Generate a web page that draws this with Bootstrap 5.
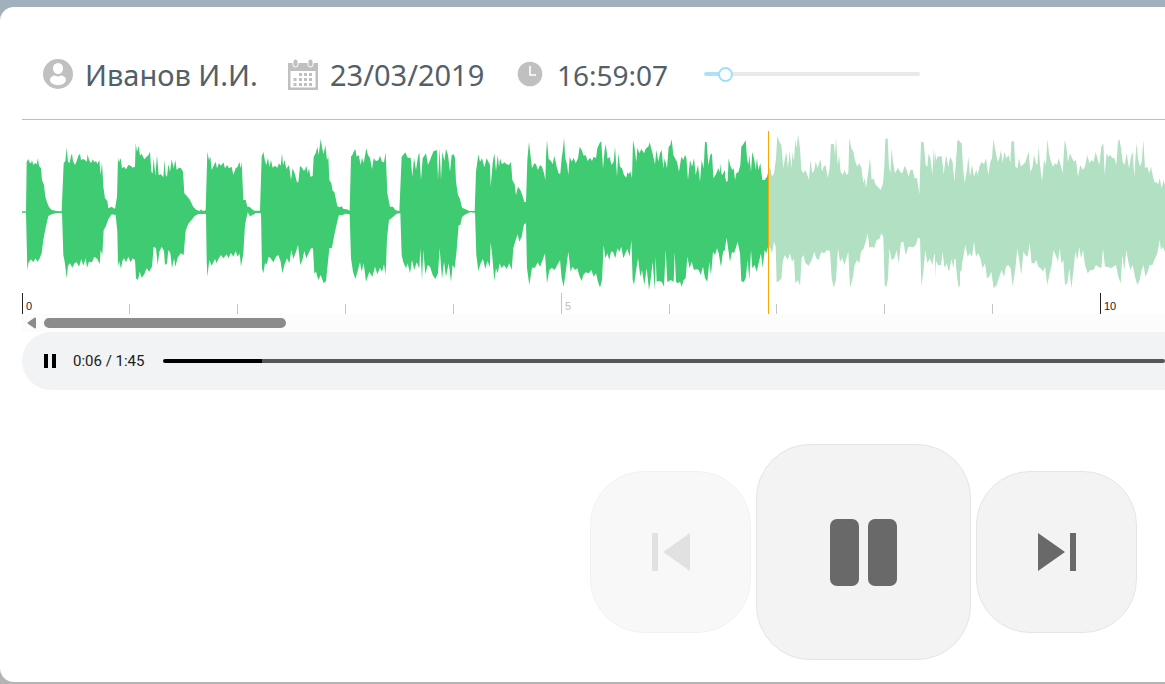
<!DOCTYPE html>
<html lang="ru">
<head>
<meta charset="utf-8">
<meta name="viewport" content="width=device-width, initial-scale=1">
<title>Запись разговора</title>
<link href="https://cdn.jsdelivr.net/npm/bootstrap@5.3.0/dist/css/bootstrap.min.css" rel="stylesheet">
<style>
  body { background: linear-gradient(#a0b1bd, #b4b4b6); font-family: "Noto Sans", "Open Sans", sans-serif; }
  .sheet { margin: 7px 0 2px; min-height: calc(100vh - 9px); border-radius: 14px 0 0 14px; padding-left: 22px; }
  .call-info { height: 113px; padding: 22px 0 0 21px; border-bottom: 1px solid #bdbdbd; color: #535f69; font-size: 29px; line-height: 40px; }
  .call-info svg { flex: none; fill: #c0c0c0; }
  .call-info span { padding-top: 2px; }
  .info-name { width: 245px; }
  .info-date { width: 227px; }
  .info-time { width: 189px; font-size: 28px; }
  input.slim { appearance: none; -webkit-appearance: none; display: block; margin: 0; height: 16px; background: transparent; }
  input.slim::-webkit-slider-runnable-track { height: 4px; border-radius: 2px; background: linear-gradient(to right, var(--on) var(--done), var(--off) var(--done)); }
  input.slim::-webkit-slider-thumb { -webkit-appearance: none; }
  .volume { --on: #abe2fb; --off: #e9e9e9; width: 216px; }
  .volume::-webkit-slider-thumb { width: 15px; height: 15px; margin-top: -5px; border: 2px solid #9fdefa; border-radius: 50%; background: #fafdff; }
  .seek { --on: #000; --off: #565656; min-width: 0; }
  .seek::-webkit-slider-thumb { width: 4px; height: 4px; background: transparent; }
  .wave { margin-top: 11px; overflow: hidden; }
  .wave svg { flex: none; }
  .hscroll { height: 18px; background: #fcfcfc; padding-left: 5px; gap: 7px; }
  .hscroll-thumb { width: 242px; height: 10px; border-radius: 5px; background: #8b8b8b; }
  .player { height: 58px; border-radius: 29px 0 0 29px; background: #f1f3f4; padding-left: 22px; font-family: Roboto, sans-serif; font-size: 15px; color: #202020; }
  .player time { width: 74px; margin: 0 16px 0 17px; white-space: nowrap; }
  .controls { padding: 54px 28px 22px 0; gap: 5px; }
  .ctl { width: 161px; height: 162px; padding: 0; border: 1px solid #e5e5e5; border-radius: 54px; background: #f3f3f3; color: #696969; }
  .ctl-main { width: 215px; height: 216px; }
  .ctl:disabled { opacity: .5; background: #f3f3f3; border-color: #e5e5e5; color: #c4c4c4; }
</style>
</head>
<body>
<main class="sheet bg-white overflow-hidden">
  <header class="call-info d-flex align-items-center">
    <div class="info-name d-flex align-items-center gap-2">
      <svg width="30" height="30" viewBox="0 0 30 30"><circle cx="15" cy="15" r="15"/><ellipse cx="15" cy="9.500" rx="5" ry="5.500" fill="#fff"/><path fill="#fff" d="M7 21c0-3 3-4.500 5-4.500 2 1.200 4 1.200 6 0 2 0 5 1.500 5 4.500 0 3-4 5.200-8 5.200S7 24 7 21z"/></svg>
      <span class="ps-1">Иванов И.И.</span>
    </div>
    <div class="info-date d-flex align-items-center gap-2">
      <svg width="30" height="31" viewBox="0 0 30 31"><path fill-rule="evenodd" d="M0 4h30v27H0zM2.500 12v16.500h25V12z"/><g stroke="#fff" stroke-width="1"><rect x="5" y="0" width="5" height="8" rx="2.500"/><rect x="20" y="0" width="5" height="8" rx="2.500"/></g><path d="M11 14h3v3h-3zM16 14h3v3h-3zM21 14h3v3h-3zM5.500 19h3v3h-3zM11 19h3v3h-3zM16 19h3v3h-3zM21 19h3v3h-3zM5.500 24h3v3h-3zM11 24h3v3h-3zM16 24h3v3h-3zM21 24h3v3h-3z"/></svg>
      <span class="ps-1">23/03/2019</span>
    </div>
    <div class="info-time d-flex align-items-center gap-2">
      <svg width="30" height="30" viewBox="0 0 30 30"><circle cx="15" cy="15" r="12.300"/><path d="M15 7v9h6" fill="none" stroke="#fff" stroke-width="1.600"/></svg>
      <span class="ps-1">16:59:07</span>
    </div>
    <input class="slim volume" type="range" min="0" max="100" value="7" aria-label="Громкость" style="--done: 10%">
  </header>

  <section class="wave d-flex" aria-label="Форма сигнала">
    <svg width="1143" height="183" viewBox="0 0 1143 183">
      <svg width="1143" height="183" viewBox="0 18 3429 549">
        <g fill="#3fcb72">
          <path transform="translate(-21 0)" d="M21 259L33 259 35 110 40 102 43 112 48 115 51 106 55 120 60 114 65 118 69 100 72 122 78 130 81 165 87 180 91 215 97 235 102 246 110 255 125 258 140 259 146 115 151 108 155 68 159 110 164 114 168 92 171 86 174 108 180 120 185 108 190 92 195 86 198 105 205 102 210 105 215 110 218 88 222 105 228 114 234 103 238 112 243 108 247 117 253 106 257 150 261 112 265 185 270 220 277 228 280 250 290 245 295 249 300 251 306 215 309 98 312 112 317 100 321 130 327 125 333 133 340 120 347 122 353 128 360 125 362 55 366 80 371 62 375 92 380 86 388 103 395 95 400 91 405 80 409 140 413 145 416 98 421 152 426 90 431 150 438 148 445 157 449 105 452 150 456 155 460 118 465 140 470 103 476 130 481 105 485 135 492 128 498 130 504 140 508 205 515 212 525 225 535 246 545 255 555 258 558 252 563 258 572 256 575 150 577 80 582 105 586 95 590 135 597 120 602 110 606 130 612 115 618 122 625 112 630 130 636 120 642 130 650 125 655 150 662 130 668 125 673 110 677 130 680 110 685 225 692 225 697 245 703 245 715 256 720 257V266L705 274 698 262 690 300 685 385 678 425 674 385 668 395 662 378 655 395 648 383 640 400 635 388 625 400 618 390 610 402 605 415 600 402 590 422 583 405 577 455 575 405 573 267 550 267 540 272 530 284 520 296 512 317 506 390 497 385 488 398 481 425 477 400 471 430 466 385 460 375 456 415 450 420 447 378 440 365 433 380 428 420 423 370 416 365 411 425 407 432 403 440 395 430 388 448 380 458 374 440 369 465 363 460 360 405 353 400 347 412 340 395 333 412 327 400 322 408 318 432 313 408 309 425 307 320 302 270 290 268 280 283 272 305 266 315 262 390 257 375 254 418 247 402 238 395 231 412 222 410 216 428 212 400 205 422 199 402 192 425 185 412 178 415 172 428 165 415 159 422 155 460 149 410 145 390 141 264 125 264 110 268 100 273 92 308 85 345 80 385 74 400 68 410 61 400 55 412 48 403 41 412 37 435 35 350 33 263 21 263z"/>
          <path transform="translate(684 0)" d="M15 257L30 257 35 95 40 80 45 108 49 120 54 98 58 125 63 105 68 128 75 122 82 128 87 115 92 122 96 85 99 120 104 105 109 132 117 120 123 165 128 130 134 145 141 172 145 172 150 123 156 128 161 137 165 135 169 122 173 145 177 130 181 155 188 153 191 95 197 85 202 65 206 90 212 42 217 72 221 88 226 60 231 105 235 95 238 165 244 175 248 198 253 200 262 244 270 247 275 243 280 252 290 253 299 257 303 95 307 90 312 78 316 72 320 95 326 90 332 120 336 98 341 115 349 70 354 90 360 100 366 132 371 100 378 108 385 106 390 92 396 110 402 112 407 82 412 205 420 245 429 245 436 255 448 259 455 95 461 88 466 82 473 98 482 98 487 155 492 98 498 135 504 95 508 82 513 165 518 100 528 85 534 120 541 103 548 85 551 78 561 76 564 165 569 70 573 165 577 80 583 108 588 72 594 90 600 140 605 90 611 88 615 98 618 170 624 210 630 222 636 248 647 253 657 258 674 258 678 140 685 88 690 110 696 100 703 127 710 100 720 120V425L712 408 706 432 699 402 692 415 685 438 679 390 675 263 660 262 643 270 636 277 631 300 626 300 620 375 614 430 608 420 603 470 596 415 588 455 582 410 576 462 569 370 564 445 556 462 548 450 540 425 533 420 526 448 520 375 516 465 511 370 508 430 500 412 493 435 486 405 480 445 473 415 468 430 460 412 455 390 451 265 440 266 428 277 417 285 411 340 407 450 402 418 396 440 390 428 382 448 375 425 367 455 358 440 348 470 341 415 335 440 330 412 324 435 316 462 309 440 303 400 299 268 286 266 276 271 267 270 260 298 253 330 246 368 238 370 232 430 228 468 221 475 212 450 205 465 198 440 193 445 189 370 183 370 176 385 169 400 163 378 157 405 151 420 144 360 138 380 130 402 124 375 118 415 111 400 104 418 97 445 92 410 85 390 78 395 70 412 62 400 56 395 50 418 45 415 40 445 36 430 33 264 15 264z"/>
          <path transform="translate(1389 0)" d="M15 120L17 185 23 115 28 85 33 138 38 90 42 125 45 100 51 118 58 112 65 118 72 120 78 110 82 165 89 178 93 210 99 185 106 195 112 210 118 231 123 231 127 105 132 50 138 105 141 130 148 115 153 118 159 135 165 120 171 125 177 145 181 165 183 95 186 45 191 102 198 108 203 118 208 92 215 125 222 148 226 145 230 100 233 80 237 38 241 100 246 118 250 150 254 95 260 110 266 98 272 115 279 100 284 65 290 75 296 92 302 90 308 108 315 98 321 108 326 95 333 100 337 70 345 52 349 50 354 130 359 75 362 57 368 102 374 95 379 120 386 110 390 65 396 155 400 85 405 125 411 130 417 150 424 158 427 142 432 148 436 138 441 160 444 45 449 70 454 112 457 68 463 85 469 72 477 85 483 70 490 65 494 52 499 72 504 90 510 118 514 75 520 110 525 85 530 75 535 130 539 100 546 130 551 65 556 60 560 42 565 90 570 100 576 110 582 140 589 95 595 105 600 90 604 98 609 165 615 105 621 125 627 100 632 150 639 120 645 170 650 105 656 130 660 50 665 52 670 120 676 90 681 85 685 160 693 148 700 130 706 145 712 150 720 135V375L714 380 708 425 701 385 696 370 690 390 684 380 678 450 673 410 667 470 660 460 654 425 647 450 641 435 634 432 627 435 620 410 614 430 607 395 602 460 596 465 590 485 585 470 578 475 573 470 569 380 566 470 557 465 547 472 542 375 537 485 530 470 521 468 515 470 512 395 509 495 503 410 498 455 492 495 485 430 478 480 471 435 466 455 459 400 452 445 447 480 443 465 439 345 434 395 427 372 421 385 415 400 409 365 403 380 397 370 391 400 384 380 378 380 373 405 367 385 361 400 356 360 351 465 345 488 339 470 333 445 326 455 319 435 311 445 302 442 295 450 290 468 283 452 277 430 270 435 263 425 257 440 250 380 243 435 236 485 230 460 225 405 217 420 209 435 200 428 193 435 186 475 180 385 173 405 165 425 158 412 150 428 141 428 133 480 126 430 123 295 117 298 110 335 103 350 98 328 92 345 85 370 80 435 73 415 65 432 57 420 50 430 44 415 38 445 33 430 28 468 22 395 17 352 15 410z"/>
          <path transform="translate(2094 0)" d="M0 115L6 155 12 145 19 170 23 168 26 100 32 125 37 135 41 130 45 165 49 145 55 142 61 120 64 65 70 58 77 45 81 100 85 120 88 90 93 140 97 80 103 105 107 135 111 100 115 135 121 115 127 165 134 165 141 155 145 140V362L139 385 134 375 128 428 123 385 117 410 110 440 104 420 97 430 93 375 88 465 83 405 77 460 71 472 64 468 60 385 53 350 47 370 42 385 36 380 30 410 25 375 20 338 15 370 9 375 0 420z"/>
        </g>
        <g fill="#b1e0c3">
          <path transform="translate(2094 0)" d="M145 140L150 125 156 155 162 145 168 100 172 32 178 50 184 60 190 130 195 100 199 82 204 130 209 75 214 130 218 82 222 110 226 45 230 70 234 28 240 70 244 135 250 145 256 135 261 148 267 165 271 105 277 145 283 135 287 110 293 130 301 102 306 140 311 125 317 120 323 160 329 130 333 57 342 58 345 95 348 35 353 120 357 90 362 140 368 150 374 135 379 150 385 145 388 38 394 70 400 80 406 110 412 125 418 115 424 128 430 175 434 160 438 190 445 140 450 98 455 165 461 160 466 178 473 185 482 195 489 175 493 125 496 42 503 40 507 125 511 145 515 70 519 110 525 145 534 128 540 140 547 145 554 122 560 135 566 155 571 135 578 135 584 160 591 160 598 208 603 50 611 52 617 120 622 125 626 85 631 100 637 150 641 70 647 150 652 95 660 95 665 92 671 150 678 90 685 130 691 95 697 110 703 185 708 110 714 45 720 50V490L713 460 708 400 701 405 694 405 687 435 681 405 675 430 668 375 662 415 656 422 649 410 643 385 637 420 630 400 622 415 616 375 610 440 604 485 600 340 593 340 587 360 580 367 572 365 565 365 557 390 550 350 543 352 536 415 530 375 523 400 515 405 508 370 504 460 499 487 494 480 490 335 484 325 478 342 470 345 463 368 455 365 448 368 443 325 437 350 430 372 423 380 418 415 411 405 404 420 398 460 390 490 385 380 379 400 373 420 367 400 360 410 354 370 348 465 341 488 335 460 330 378 321 375 312 385 304 380 296 405 289 400 283 380 275 405 266 422 256 413 250 390 245 400 240 482 234 465 226 475 222 400 216 410 210 385 203 405 195 390 189 405 184 460 177 468 170 472 167 365 162 350 156 385 151 370 145 362z"/>
          <path transform="translate(2739 0)" d="M75 80L80 55 84 125 89 175 95 140 100 95 105 155 111 120 117 155 124 135 128 150 133 125 140 110 147 118 153 100 160 150 166 110 171 100 175 42 181 75 188 110 193 100 198 75 203 115 208 80 214 100 221 90 226 115 229 50 237 48 241 125 247 130 252 100 258 125 265 118 271 112 276 95 281 80 286 140 292 130 297 90 303 115 307 120 311 65 315 120 321 170 327 105 333 120 337 42 342 85 348 110 354 125 360 115 366 120 371 100 377 120 383 145 389 45 394 65 399 110 405 85 411 100 417 110 423 105 429 155 436 120 443 135 450 125 457 90 463 115 470 105 476 110 482 80 487 100 493 120 499 65 505 55 509 150 515 85 520 95 526 90 532 100 538 98 544 120 549 50 553 42 558 70 563 110 569 120 575 85 582 130 588 95 593 80 598 155 604 55 609 100 615 125 620 110 625 45 630 130 637 125 643 145 648 125 654 155 660 175 665 170 669 180 674 160 680 190 686 165 690 180V380L683 365 678 375 674 345 667 385 660 400 652 420 644 420 638 440 631 455 626 420 620 435 614 465 607 480 600 455 593 420 586 435 580 410 574 375 568 435 562 390 557 475 550 455 543 420 535 425 527 430 519 425 510 425 504 370 499 430 490 425 483 420 475 435 466 435 458 445 450 420 444 375 438 400 433 365 427 405 421 380 415 440 409 490 403 430 397 475 390 480 385 405 379 415 374 370 369 410 362 390 355 375 350 420 343 450 337 480 330 425 324 440 317 430 310 425 304 405 298 415 290 415 284 355 278 395 271 390 265 380 259 450 252 400 247 370 241 430 233 485 227 430 220 420 213 425 207 455 200 435 193 455 185 480 176 490 169 440 162 455 156 460 150 415 143 430 136 400 130 385 123 395 117 350 111 395 104 385 98 395 91 360 84 400 78 435 75 440z"/>
          <path transform="translate(2739 0)" d="M0 80L4 105 10 95 19 95 24 140 30 160 34 95 39 130 45 100 52 110 58 170 63 125 67 45 72 50 80 55V435L75 440 71 490 65 445 60 380 55 430 49 400 42 440 35 415 28 425 23 380 18 420 10 420 4 385 0 460z"/>
        </g>
      </svg>
      <path d="M0 162h1v21h-1zM1078 162h1v21h-1z" fill="#222"/>
      <path d="M539 162h1v21h-1zM107 173h1v10h-1zM215 173h1v10h-1zM323 173h1v10h-1zM431 173h1v10h-1zM647 173h1v10h-1zM754 173h1v10h-1zM862 173h1v10h-1zM970 173h1v10h-1z" fill="#c4c4c4"/>
      <g font-family="Liberation Sans, Arial, sans-serif" font-size="11"><text x="4" y="179" fill="#222">0</text><text x="543" y="179" fill="#c0c0c0">5</text><text x="1082" y="179" fill="#222">10</text></g>
      <path d="M746 0h1v183h-1z" fill="#ffa500"/>
    </svg>
  </section>

  <div class="hscroll d-flex align-items-center">
    <svg width="10" height="12" viewBox="0 0 10 12"><path d="M8 1.500v9L1.500 6z" fill="#8b8b8b" stroke="#8b8b8b" stroke-width="2" stroke-linejoin="round"/></svg>
    <div class="hscroll-thumb"></div>
  </div>

  <section class="player d-flex align-items-center">
    <button class="btn p-0 border-0 d-flex" type="button" aria-label="Пауза"><svg width="12" height="14" viewBox="0 0 12 14"><path d="M0 0h4v14H0zM8 0h4v14H8z"/></svg></button>
    <time>0:06 / 1:45</time>
    <input class="slim seek flex-grow-1" type="range" min="0" max="100" value="10" aria-label="Позиция" style="--done: 9.9%">
  </section>

  <div class="controls d-flex justify-content-end align-items-center">
    <button class="btn ctl" type="button" disabled aria-label="Предыдущая"><svg width="38" height="38" viewBox="0 0 38 38" fill="currentColor"><path d="M0 0h6v38H0zM38 0v38L11 19z"/></svg></button>
    <button class="btn ctl ctl-main" type="button" aria-label="Пауза"><svg width="67" height="67" viewBox="0 0 67 67" fill="currentColor"><rect width="29" height="67" rx="7"/><rect x="38" width="29" height="67" rx="7"/></svg></button>
    <button class="btn ctl" type="button" aria-label="Следующая"><svg width="38" height="38" viewBox="0 0 38 38" fill="currentColor"><path d="M32 0h6v38h-6zM0 0l27 19L0 38z"/></svg></button>
  </div>
</main>
<script src="https://cdn.jsdelivr.net/npm/bootstrap@5.3.0/dist/js/bootstrap.bundle.min.js"></script>
</body>
</html>
